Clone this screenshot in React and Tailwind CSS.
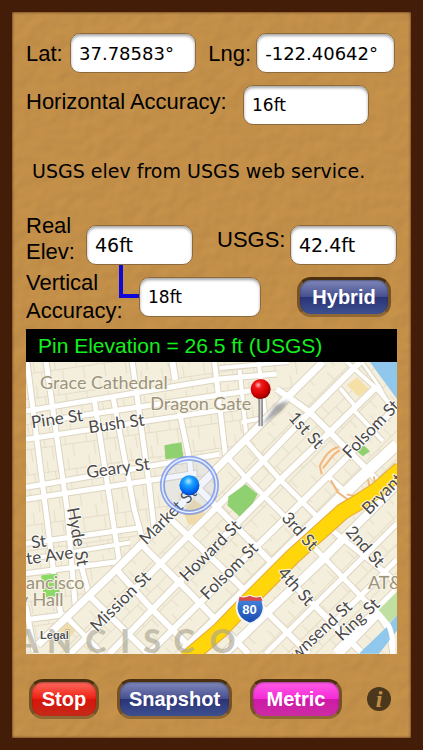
import React, { useState } from 'react';

// Streets of the downtown grid, north of Market
const gridStreets = [
  { d: 'M0 49L193 17L250 12', w: 5 },
  { d: 'M24 58L193 33L236 27', w: 5 },
  { d: 'M0 77L193 48L215 45', w: 5 },
  { d: 'M0 125L193 92', w: 5 },
  { d: 'M0 137L170 111', w: 5 },
  { d: 'M0 181L115 165', w: 5 },
  { d: 'M0 197L104 180', w: 4 },
  { d: 'M0 211L93 199', w: 5 },
  { d: 'M0 257L46 251', w: 5 },
  { d: 'M1 0L27 205L30 230L36 256L46 270', w: 5 },
  { d: 'M20 0L41 147L50 254', w: 5 },
  { d: 'M55 203L64 236', w: 5 },
  { d: 'M68 37L85 147L93 199', w: 5 },
  { d: 'M87 36L108 147L117 180', w: 5 },
  { d: 'M106 0L123 124L128 168', w: 5 },
  { d: 'M146 0L149 18', w: 6 },
  { d: 'M153 50L163 97L166 125', w: 5 },
  { d: 'M188 0L199 94', w: 5 },
  { d: 'M213 8L220 76', w: 4 },
  { d: 'M232 0L239 56', w: 4 },
  { d: 'M0 243L10 300', w: 5 },
  { d: 'M215 60L237 56', w: 4 },
  { d: 'M193 6L262 0', w: 4 },
];

// Streets running with Market, one string per avenue
const somaStreets = [
  { d: 'M12 282L90 207L266 30L296 0', w: 7 },
  { d: 'M44 291L136 199L163 172L236 99L283 50L333 0', w: 6 },
  { d: 'M83 291L153 219L253 118L303 70L350 24', w: 6 },
  { d: 'M122 291L313 102L370 44', w: 6 },
  { d: 'M156 291L190 258L330 119L370 82', w: 11 },
  { d: 'M198 291L236 254L296 197L370 122', w: 8 },
  { d: 'M239 291L316 215L370 161', w: 5 },
  { d: 'M275 291L333 234L370 197', w: 5 },
  { d: 'M310 291L346 254L370 230', w: 11 },
  { d: 'M40 254L76 291', w: 5 },
  { d: 'M63 233L122 291', w: 6 },
  { d: 'M90 207L126 247L170 291', w: 6 },
  { d: 'M113 180L163 230L222 291', w: 6 },
  { d: 'M139 152L193 203L282 291', w: 6 },
  { d: 'M166 120L246 201L336 291', w: 6 },
  { d: 'M200 94L218 114L250 146L316 215L350 250L362 268L366 291', w: 5 },
  { d: 'M218 77L253 117L298 162L363 214L370 226', w: 5 },
  { d: 'M250 27L283 50L303 70L340 107L354 123', w: 6 },
  { d: 'M326 47L356 79', w: 4 },
  { d: 'M313 26L330 46', w: 4 },
  { d: 'M320 0L350 27L370 50', w: 4 },
  { d: 'M335 0L352 24L366 50', w: 3 },
  { d: 'M300 113L326 136', w: 5 },
];

const darkLabels = [
  { text: 'Pine St', x: 6, y: 66, angle: -8 },
  { text: 'Bush St', x: 63, y: 71, angle: -8 },
  { text: 'Geary St', x: 61, y: 116, angle: -8 },
  { text: 'Market St', x: 120, y: 183, angle: -45 },
  { text: 'Hyde St', x: 41, y: 146, angle: 80 },
  { text: 'St', x: 6, y: 186, angle: -8 },
  { text: 'te Ave', x: 1, y: 202, angle: -8 },
  { text: 'Mission St', x: 71, y: 270, angle: -45 },
  { text: 'Howard St', x: 160, y: 220, angle: -45 },
  { text: 'Folsom St', x: 181, y: 238, angle: -45 },
  { text: 'Folsom St', x: 323, y: 97, angle: -46 },
  { text: '1st St', x: 261, y: 56, angle: 48 },
  { text: '3rd St', x: 254, y: 156, angle: 48 },
  { text: '4th St', x: 250, y: 211, angle: 48 },
  { text: '2nd St', x: 318, y: 170, angle: 48 },
  { text: 'Bryant', x: 342, y: 153, angle: -45 },
  { text: 'Townsend St', x: 257, y: 310, angle: -43 },
  { text: 'King St', x: 315, y: 279, angle: -43 },
];

const paleLabels = [
  { text: 'Grace Cathedral', x: 14, y: 27 },
  { text: 'Dragon Gate', x: 124, y: 48 },
  { text: 'ancisco', x: 0, y: 226 },
  { text: 'y Hall', x: -7, y: 243 },
  { text: 'AT&T Park', x: 341, y: 226 },
];

const cityLetters = [
  { char: 'A', x: -10 },
  { char: 'N', x: 21 },
  { char: 'C', x: 59 },
  { char: 'I', x: 94 },
  { char: 'S', x: 117 },
  { char: 'C', x: 147 },
  { char: 'O', x: 183 },
];

const Streets = ({ streets }) => (
  <g fill="none" strokeLinejoin="round">
    {streets.map((s) => (
      <path key={s.d} d={s.d} stroke="#ddd5bf" strokeWidth={s.w + 2} />
    ))}
    {streets.map((s) => (
      <path key={s.d} d={s.d} stroke="#ffffff" strokeWidth={s.w} />
    ))}
  </g>
);

const MapView = () => (
  <svg viewBox="0 0 370 291" className="block w-full bg-[#f4eedc]" role="img" aria-label="Map of San Francisco">
    <defs>
      <pattern id="lotsGrid" width="21" height="25" patternUnits="userSpaceOnUse" patternTransform="rotate(-8)">
        <path d="M0 12H21M7 0V12M14 12V25" stroke="#e0d8c4" strokeWidth="0.8" fill="none" />
      </pattern>
      <pattern id="lotsSoma" width="28" height="20" patternUnits="userSpaceOnUse" patternTransform="rotate(-45)">
        <path d="M0 10H28M9 0V10M19 10V20" stroke="#e0d8c4" strokeWidth="0.8" fill="none" />
      </pattern>
      <clipPath id="northClip">
        <path d="M0 0H296L0 296Z" />
      </clipPath>
      <radialGradient id="pinHead" cx="0.38" cy="0.3" r="0.7">
        <stop offset="0" stopColor="#ffc0c0" />
        <stop offset="0.25" stopColor="#f01818" />
        <stop offset="0.7" stopColor="#d00000" />
        <stop offset="1" stopColor="#8c0000" />
      </radialGradient>
      <radialGradient id="userDot" cx="0.45" cy="0.3" r="0.75">
        <stop offset="0" stopColor="#b5ecff" />
        <stop offset="0.3" stopColor="#1aa2ff" />
        <stop offset="0.7" stopColor="#0068f0" />
        <stop offset="1" stopColor="#0038b0" />
      </radialGradient>
      <linearGradient id="needle">
        <stop offset="0" stopColor="#555" />
        <stop offset="0.5" stopColor="#ddd" />
        <stop offset="1" stopColor="#555" />
      </linearGradient>
      <linearGradient id="shield" x1="0" y1="0" x2="0" y2="1">
        <stop offset="0" stopColor="#4b8be0" />
        <stop offset="1" stopColor="#1649ae" />
      </linearGradient>
      <filter id="soft" x="-30%" y="-30%" width="160%" height="160%">
        <feGaussianBlur stdDeviation="1.5" />
      </filter>
    </defs>

    <rect width="370" height="291" fill="url(#lotsSoma)" />
    <path d="M0 0H296L0 296Z" fill="#f4eedc" />
    <path d="M0 0H296L0 296Z" fill="url(#lotsGrid)" />

    {/* Plazas */}
    <path d="M320 23L330 15L342 27L332 35Z" fill="#f5e0a8" />
    <path d="M157 150L166 136L177 144L178 163L162 162Z" fill="#f0dcaa" />
    <path d="M31 272L40 257L49 268L41 278Z" fill="#f0dcaa" />

    <g clipPath="url(#northClip)">
      <Streets streets={gridStreets} />
    </g>
    <Streets streets={somaStreets} />

    {/* Parks */}
    <path d="M138 83L155 80L157 95L139 97Z" fill="#8fd071" />
    <path d="M202 134L219 122L231 132L226 141L213 154L201 143Z" fill="#8fd071" />
    <path d="M15 213L31 211L34 233L18 235Z" fill="#8cda66" />
    <path d="M330 89L337 83L343 89L336 94Z" fill="#8fd071" />
    <path d="M351 248L370 229V252L360 263Z" fill="#bfe0a0" />

    {/* Bay */}
    <path d="M343 0H370V37Z" fill="#8fc8ec" />
    <path d="M332 291L361 263L370 252V268L352 291Z" fill="#8fc8ec" />
    <path d="M350 249L361 262Q366 269 366 291" fill="none" stroke="#fff" strokeWidth="5" />

    {/* Freeway ramps */}
    <path d="M312 85C304 86 298 93 293 104L295 112M313 88C306 91 303 98 296 106M304 118L311 130L322 138M341 117L344 131M347 114L349 128M320 132L333 135" fill="none" stroke="#f3b77c" strokeWidth="2" />

    {/* Interstate */}
    <path d="M160 296L193 268L223 237L266 194L316 149L333 139L350 128L374 107" fill="none" stroke="#e7a93a" strokeWidth="17" strokeLinejoin="round" />
    <path d="M160 296L193 268L223 237L266 194L316 149L333 139L350 128L374 107" fill="none" stroke="#ffd60a" strokeWidth="15" strokeLinejoin="round" />

    <g fontFamily="Lato, 'Open Sans', sans-serif">
      <g fontSize="32" fontWeight="900" fill="#a9a58f" fillOpacity="0.65">
        {cityLetters.map((l) => (
          <text key={l.x} x={l.x} y="290">{l.char}</text>
        ))}
      </g>
      <g fontSize="18" fill="#9c937b" stroke="#f8f4e8" strokeWidth="2" paintOrder="stroke">
        {paleLabels.map((l) => (
          <text key={l.text} x={l.x} y={l.y}>{l.text}</text>
        ))}
      </g>
      <g fontSize="17" fill="#4b4a48" stroke="#ffffff" strokeWidth="2" strokeOpacity="0.8" paintOrder="stroke">
        {darkLabels.map((l) => (
          <text key={`${l.text}-${l.x}`} transform={`translate(${l.x} ${l.y}) rotate(${l.angle})`}>{l.text}</text>
        ))}
      </g>
    </g>

    {/* I-80 shield */}
    <path d="M213 234Q218 236 223 233Q229 236 234 234Q237 239 237 246Q236 257 223 261Q211 257 210 246Q210 239 213 234Z" fill="url(#shield)" stroke="#f5f5f5" strokeWidth="2" />
    <path d="M213 234Q218 236 223 233Q229 236 234 234L236 238H212Z" fill="#d9484a" />
    <text x="223" y="251" textAnchor="middle" fontFamily="'Liberation Sans', Arial, sans-serif" fontSize="13" fontWeight="700" fill="#fff">80</text>

    {/* Current location */}
    <circle cx="163" cy="123" r="27" fill="#8fb0ff" fillOpacity="0.12" stroke="#5a80f0" strokeWidth="5" strokeOpacity="0.65" />
    <circle cx="163" cy="123" r="27" fill="none" stroke="#e8efff" strokeWidth="1.5" />
    <circle cx="163" cy="123" r="10" fill="url(#userDot)" />

    {/* Dropped pin */}
    <path d="M235 63L249 43L262 38L255 48Z" fill="#333" fillOpacity="0.45" filter="url(#soft)" />
    <rect x="232" y="34" width="4" height="30" fill="url(#needle)" />
    <circle cx="234" cy="27" r="10" fill="url(#pinHead)" />

    <text x="14" y="276" fontFamily="'Liberation Sans', Arial, sans-serif" fontSize="11" fontWeight="700" fill="#555" stroke="#fff" strokeWidth="1.5" paintOrder="stroke">Legal</text>
  </svg>
);

// Rough leather-like backdrop
const Texture = () => (
  <svg className="absolute inset-0 h-full w-full" aria-hidden="true">
    <filter id="leather" x="0" y="0" width="100%" height="100%">
      <feTurbulence type="fractalNoise" baseFrequency="0.06" numOctaves="2" seed="4" />
      <feDiffuseLighting lightingColor="#c28f48" surfaceScale="0.9" diffuseConstant="1.13">
        <feDistantLight azimuth="235" elevation="62" />
      </feDiffuseLighting>
    </filter>
    <rect width="100%" height="100%" filter="url(#leather)" />
  </svg>
);

const inputBase =
  'h-10 min-w-0 rounded-[10px] border border-[#8c6a3c] bg-white px-2 font-[Verdana,"DejaVu_Sans",sans-serif] text-black shadow-[inset_0_2px_3px_rgba(0,0,0,0.35)] focus:outline-none';

const buttonBase =
  'h-10 rounded-[14px] border-[3px] border-t-[#4a3010] border-r-[#765124] border-b-[#8f6833] border-l-[#765124] text-xl font-bold text-white shadow-[inset_0_1px_2px_rgba(0,0,0,0.35)]';

const blueGloss = 'bg-[linear-gradient(#8088bb,#47508f_49%,#2b3478_51%,#3d5090)]';

const App = () => {
  const [mapType, setMapType] = useState('Hybrid');
  const [units, setUnits] = useState('Metric');
  const [running, setRunning] = useState(true);

  return (
    <div className="flex min-h-screen flex-col border-12 border-[#441d08] bg-[#c28f48] font-['Liberation_Sans',Arial,sans-serif] text-black">
      <main className="relative flex flex-1 flex-col">
        <Texture />
        <div className="relative flex flex-1 flex-col px-[14px] pt-[21px] pb-[19px] shadow-[inset_0_0_3px_#441d08]">
          {/* Coordinates */}
          <div className="flex items-center pr-0.5">
            <label htmlFor="lat" className="w-11 text-[22px]">Lat:</label>
            <input id="lat" className={`${inputBase} w-0 grow-[120] text-lg`} defaultValue="37.78583°" />
            <label htmlFor="lng" className="ml-3 w-12 text-[22px]">Lng:</label>
            <input id="lng" className={`${inputBase} w-0 grow-[134] text-lg`} defaultValue="-122.40642°" />
          </div>

          <div className="mt-3 flex items-start">
            <label htmlFor="hacc" className="w-[217px] text-[22px]">Horizontal Accuracy:</label>
            <input id="hacc" className={`${inputBase} mr-7 w-0 grow text-[17px]`} defaultValue="16ft" />
          </div>

          <p className="mt-8 pl-1.5 font-[Verdana,'DejaVu_Sans',sans-serif] text-[19px] leading-7">
            USGS elev from USGS web service.
          </p>

          {/* Elevations */}
          <div className="mt-7 flex items-end">
            <label htmlFor="elev" className="w-[60px] text-[22px] leading-[26px]">
              Real
              <br />
              Elev:
            </label>
            <div className="relative flex w-0 grow">
              <input id="elev" className={`${inputBase} w-full text-[19px]`} defaultValue="46ft" />
              <span className="absolute top-full left-[33px] h-[33px] w-5 border-b-4 border-l-4 border-[#1008d8]" />
            </div>
            <label htmlFor="usgs" className="ml-6 w-[73px] self-center text-[22px]">USGS:</label>
            <div className="flex w-0 grow">
              <input id="usgs" className={`${inputBase} w-full text-[19px]`} defaultValue="42.4ft" />
            </div>
          </div>

          <div className="mt-1 flex items-center">
            <label htmlFor="vacc" className="w-[113px] text-[22px] leading-7">
              Vertical
              <br />
              Accuracy:
            </label>
            <input id="vacc" className={`${inputBase} w-0 grow text-[17px]`} defaultValue="18ft" />
            <button
              type="button"
              className={`${buttonBase} ${blueGloss} mr-1.5 ml-9 w-[94px]`}
              onClick={() => setMapType(mapType === 'Hybrid' ? 'Standard' : 'Hybrid')}
            >
              {mapType}
            </button>
          </div>

          <section className="mt-1">
            <h2 className="bg-black px-3 text-[21px] leading-[33px] text-[#14f01e]">
              Pin Elevation = 26.5 ft (USGS)
            </h2>
            <MapView />
          </section>

          {/* Actions */}
          <div className="mt-auto flex items-center gap-[18px] pr-1.5 pl-[3px]">
            <button
              type="button"
              className={`${buttonBase} w-[70px] bg-[linear-gradient(#ff6a5e,#ee2015_49%,#d8160c_51%,#c42a18)]`}
              onClick={() => setRunning(!running)}
            >
              {running ? 'Stop' : 'Start'}
            </button>
            <button type="button" className={`${buttonBase} ${blueGloss} w-[115px]`}>Snapshot</button>
            <button
              type="button"
              className={`${buttonBase} w-[92px] bg-[linear-gradient(#ff5ce6,#f52bd8_49%,#cf1aa6_51%,#cc2ba4)]`}
              onClick={() => setUnits(units === 'Metric' ? 'Feet' : 'Metric')}
            >
              {units}
            </button>
            <button
              type="button"
              aria-label="Info"
              className="ml-auto h-6 w-6 rounded-full bg-[#4b371b] font-['Liberation_Serif',serif] text-2xl leading-6 font-bold text-[#c28f48] italic"
            >
              i
            </button>
          </div>
        </div>
      </main>
    </div>
  );
};

export default App;
